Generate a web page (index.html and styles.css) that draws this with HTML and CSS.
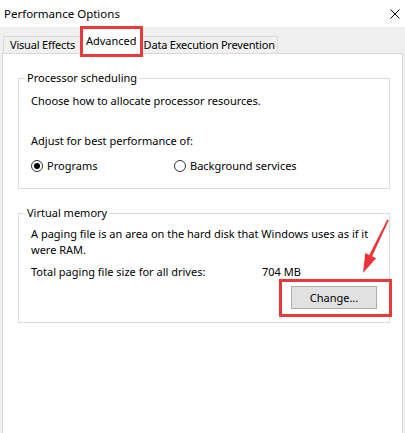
FILE: index.html
```html
<!DOCTYPE html>
<html lang="en">
<head>
    <meta charset="UTF-8">
    <title>Performance Options</title>
    <link rel="stylesheet" href="styles.css">
</head>
<body>
    <div class="titlebar">
        <span class="title">Performance Options</span>
        <svg class="close" width="10" height="10" viewBox="0 0 10 10">
            <path d="M0.5 0.5 L9.5 9.5 M9.5 0.5 L0.5 9.5" stroke="#000" stroke-width="1"/>
        </svg>
    </div>

    <div class="tabs">
        <div class="tab">Visual Effects</div>
        <div class="tab active">Advanced</div>
        <div class="tab">Data Execution Prevention</div>
    </div>

    <div class="panel">
        <fieldset class="group">
            <legend>Processor scheduling</legend>
            <p class="line first">Choose how to allocate processor resources.</p>
            <p class="line gap">Adjust for best performance of:</p>
            <div class="radios">
                <label class="radio"><span class="dot checked"></span>Programs</label>
                <label class="radio"><span class="dot"></span>Background services</label>
            </div>
        </fieldset>

        <fieldset class="group vm">
            <legend>Virtual memory</legend>
            <p class="line first">A paging file is an area on the hard disk that Windows uses as if it<br>were RAM.</p>
            <div class="total">
                <span class="total-label">Total paging file size for all drives:</span>
                <span>704 MB</span>
            </div>
            <div class="button-row">
                <div class="highlight">
                    <button class="btn">Change...</button>
                </div>
            </div>
        </fieldset>
    </div>

    <!-- annotation arrow -->
    <svg class="arrow" width="405" height="433" viewBox="0 0 405 433">
        <polygon points="387.3,219.6 388.7,220.4 372.1,256.3 376.1,258.3 363,273 365.3,253.1 369.3,255.1" fill="#ea3338"/>
    </svg>
</body>
</html>
```

FILE: styles.css
```css
body {
    margin: 0;
    background: #f0f0f0;
    font-family: "Noto Sans", sans-serif;
    font-size: 11px;
    color: #000;
    width: 405px;
    height: 433px;
    overflow: hidden;
}
.titlebar {
    background: #fff;
    height: 27px;
    display: flex;
    align-items: center;
    justify-content: space-between;
    padding: 0 5px 0 4px;
}
.title {
    font-size: 11.5px;
}
.tabs {
    height: 26px;
    display: flex;
    align-items: flex-end;
    padding-left: 3px;
}
.tab {
    height: 16px;
    line-height: 16px;
    padding: 0 6px;
    border: 1px solid #d9d9d9;
    border-bottom: none;
    background: #f0f0f0;
    letter-spacing: -0.2px;
}
.tab:last-child {
    padding: 0 2px;
}
.tab.active {
    position: relative;
    z-index: 2;
    height: 25px;
    line-height: 24px;
    padding: 0 3px;
    background: #fff;
    border: 3px solid #e8393d;
    margin-bottom: -4px;
    margin-left: -2px;
    margin-right: -2px;
    letter-spacing: 0;
}
.panel {
    margin: 0 2px;
    height: 378px;
    background: #fff;
    border: 1px solid #d9d9d9;
    padding-top: 16px;
}
.group {
    margin: 0 12px 0 15px;
    border: 1px solid #dcdcdc;
    padding: 0 12px 14px 12px;
}
.group legend {
    padding: 0 2px;
    margin-left: -6px;
    line-height: 16px;
}
.line {
    margin: 0;
    line-height: 16px;
}
.first {
    margin-top: 7px;
}
.gap {
    margin-top: 24px;
}
.radios {
    display: flex;
    margin-top: 9px;
}
.radio {
    display: flex;
    align-items: center;
    line-height: 16px;
    width: 143px;
}
.dot {
    width: 12px;
    height: 12px;
    border: 1px solid #333;
    border-radius: 50%;
    margin-right: 4px;
    box-sizing: border-box;
    position: relative;
}
.dot.checked::after {
    content: "";
    position: absolute;
    left: 2px;
    top: 2px;
    width: 6px;
    height: 6px;
    border-radius: 50%;
    background: #000;
}
.vm {
    margin-top: 16px;
    padding-bottom: 5px;
}
.vm .first {
    margin-top: 5px;
}
.total {
    display: flex;
    margin-top: 6px;
    line-height: 16px;
}
.total-label {
    width: 231px;
}
.button-row {
    display: flex;
    justify-content: flex-end;
    margin-top: -1px;
    margin-right: -15px;
}
.highlight {
    border: 3px solid #e8393d;
    padding: 4px 12px 5px 9px;
}
.btn {
    width: 86px;
    height: 23px;
    background: #e1e1e1;
    border: 1px solid #adadad;
    font-family: "Noto Sans", sans-serif;
    font-size: 11px;
    color: #000;
    padding: 0;
}
.arrow {
    position: absolute;
    left: 0;
    top: 0;
    pointer-events: none;
}
```
